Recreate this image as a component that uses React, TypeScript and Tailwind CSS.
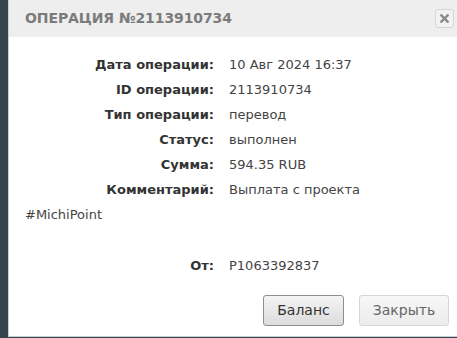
import React from "react";

const rows: [string, string][] = [
  ["Дата операции:", "10 Авг 2024 16:37"],
  ["ID операции:", "2113910734"],
  ["Тип операции:", "перевод"],
  ["Статус:", "выполнен"],
  ["Сумма:", "594.35 RUB"],
  ["Комментарий:", "Выплата с проекта"],
];

function Row({ label, value }: { label: string; value: string }) {
  return (
    <div className="flex h-[25px] items-center">
      <div className="w-[205px] shrink-0 text-right font-bold text-[#333]">{label}</div>
      <div className="pl-[15px] text-[#444]">{value}</div>
    </div>
  );
}

export default function App() {
  return (
    <div
      className="flex h-[338px] w-[457px] bg-[#36444c] text-[13px]"
      style={{ fontFamily: '"DejaVu Sans", "Noto Sans", sans-serif' }}
    >
      <div className="w-[8px] shrink-0" />
      <div className="flex h-[337px] flex-1 flex-col border-l border-b border-[#c9cfd3] bg-white">
        <div className="flex h-[37px] shrink-0 items-center justify-between bg-[#eeeeee] pl-[16px] pr-[3px]">
          <span className="text-[14px] font-bold tracking-[-0.1px] text-[#7b7b7b]">ОПЕРАЦИЯ №2113910734</span>
          <button className="flex h-[19px] w-[19px] items-center justify-center rounded-[3px] border border-[#d6d6d6] bg-[#f2f2f2]">
            <svg width="9" height="9" viewBox="0 0 10 10">
              <path d="M1.5 1.5 L8.5 8.5 M8.5 1.5 L1.5 8.5" stroke="#8a8a8a" strokeWidth="2.6" strokeLinecap="square" />
            </svg>
          </button>
        </div>
        <div className="flex flex-col pt-[15px]">
          {rows.map(([l, v]) => (
            <Row key={l} label={l} value={v} />
          ))}
          <div className="h-[25px] pl-[16px] leading-[25px] text-[#444]">#MichiPoint</div>
          <div className="h-[26px]" />
          <Row label="От:" value="P1063392837" />
        </div>
        <div className="mt-auto mb-[10px] flex justify-end gap-[15px] pr-[8px]">
          <button className="h-[31px] w-[81px] rounded-[3px] border border-[#8f8f8f] bg-gradient-to-b from-[#f4f4f4] to-[#dcdcdc] text-[14px] text-[#333]">
            Баланс
          </button>
          <button className="h-[31px] w-[90px] rounded-[3px] border border-[#d6d6d6] bg-gradient-to-b from-[#f7f7f7] to-[#ececec] text-[14px] text-[#666]">
            Закрыть
          </button>
        </div>
      </div>
    </div>
  );
}
